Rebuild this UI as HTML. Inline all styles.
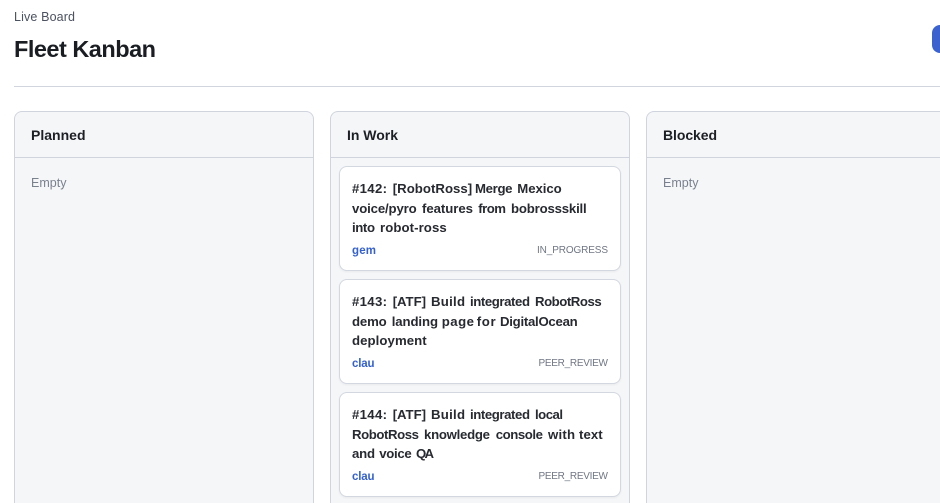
<!DOCTYPE html>
<html lang="en">
<head>
<meta charset="utf-8">
<title>Fleet Kanban</title>
<style>
html,body{margin:0;padding:0;width:940px;height:503px;overflow:hidden;background:#fff}
body{position:relative;font-family:"Liberation Sans",sans-serif}
.box{position:absolute;box-sizing:border-box}
.btn{left:932px;top:25px;width:8px;height:28px;background:#3b62cf;border-radius:8px 0 0 8px}
.rule{left:14px;top:86px;width:926px;height:1px;background:#d1d5de}
.col{top:111px;width:300px;height:392px;background:#f5f6f8;border:1px solid #cfd4dd;border-bottom:0;border-radius:8px 8px 0 0}
.col.last{width:294px;border-right:0;border-radius:8px 0 0 0}
.col i{position:absolute;left:0;right:0;top:45px;height:1px;background:#cfd4dd}
.card{left:339px;width:282px;height:105px;background:#fff;border:1px solid #d3d7e0;border-radius:8px;box-shadow:0 1px 2px rgba(20,30,50,.06)}
svg{position:absolute;left:0;top:0}
text{font-family:"Liberation Sans",sans-serif}
.t{font-size:13.2px;font-weight:700;fill:#272a30}
.h{font-size:14px;font-weight:700;fill:#1c1f24}
.e{font-size:12.5px;fill:#7a818e}
.a{font-size:11.5px;font-weight:700;fill:#3461cf}
.s{font-size:10px;fill:#6f7683}
</style>
</head>
<body>
<div class="box btn"></div>
<div class="box rule"></div>
<div class="box col" style="left:14px"><i></i></div>
<div class="box col" style="left:330px"><i></i></div>
<div class="box col last" style="left:646px"><i></i></div>
<div class="box card" style="top:166px"></div>
<div class="box card" style="top:279px"></div>
<div class="box card" style="top:392px"></div>
<svg width="940" height="503" viewBox="0 0 940 503">
<text x="14" y="21" font-size="12.5" fill="#4b5260" textLength="61">Live Board</text>
<text x="14" y="57" font-size="23.5" font-weight="700" fill="#1a1d21" textLength="142">Fleet Kanban</text>

<text class="h" x="31" y="140" textLength="54.5">Planned</text>
<text class="e" x="31" y="187" textLength="35.5">Empty</text>
<text class="h" x="347" y="140" textLength="51">In Work</text>
<text class="h" x="663" y="140" textLength="54">Blocked</text>
<text class="e" x="663" y="187" textLength="35.5">Empty</text>

<text class="t" y="193"><tspan x="352" textLength="35">#142:</tspan> <tspan x="392.7" textLength="79.5">[RobotRoss]</tspan> <tspan x="475" textLength="37.5">Merge</tspan> <tspan x="517.3" textLength="44.4">Mexico</tspan></text>
<text class="t" y="213"><tspan x="352" textLength="64.7">voice/pyro</tspan> <tspan x="422" textLength="51">features</tspan> <tspan x="478.3" textLength="27.7">from</tspan> <tspan x="511" textLength="75.7">bobrossskill</tspan></text>
<text class="t" y="232"><tspan x="352" textLength="23">into</tspan> <tspan x="380" textLength="66.7">robot-ross</tspan></text>
<text class="a" x="352" y="254" textLength="24">gem</text>
<text class="s" x="537" y="253" textLength="71">IN_PROGRESS</text>

<text class="t" y="306"><tspan x="352" textLength="35">#143:</tspan> <tspan x="392.7" textLength="33.3">[ATF]</tspan> <tspan x="431" textLength="34">Build</tspan> <tspan x="470" textLength="60">integrated</tspan> <tspan x="535" textLength="66.7">RobotRoss</tspan></text>
<text class="t" y="326"><tspan x="352" textLength="34.7">demo</tspan> <tspan x="391.7" textLength="46.3">landing</tspan> <tspan x="441.7" textLength="32.3">page</tspan> <tspan x="476.7" textLength="19">for</tspan> <tspan x="500" textLength="77.7">DigitalOcean</tspan></text>
<text class="t" x="352" y="345" textLength="74.7">deployment</text>
<text class="a" x="352" y="367" textLength="22.5">clau</text>
<text class="s" x="538.5" y="366" textLength="69.5">PEER_REVIEW</text>

<text class="t" y="419"><tspan x="352" textLength="35">#144:</tspan> <tspan x="392.7" textLength="33.3">[ATF]</tspan> <tspan x="431" textLength="34">Build</tspan> <tspan x="470" textLength="60">integrated</tspan> <tspan x="535" textLength="28">local</tspan></text>
<text class="t" y="439"><tspan x="352" textLength="67">RobotRoss</tspan> <tspan x="424" textLength="66">knowledge</tspan> <tspan x="495.7" textLength="47.3">console</tspan> <tspan x="548" textLength="27">with</tspan> <tspan x="579" textLength="23.7">text</tspan></text>
<text class="t" y="458"><tspan x="352" textLength="23">and</tspan> <tspan x="379.3" textLength="32.4">voice</tspan> <tspan x="416" textLength="18">QA</tspan></text>
<text class="a" x="352" y="480" textLength="22.5">clau</text>
<text class="s" x="538.5" y="479" textLength="69.5">PEER_REVIEW</text>
</svg>
</body>
</html>
